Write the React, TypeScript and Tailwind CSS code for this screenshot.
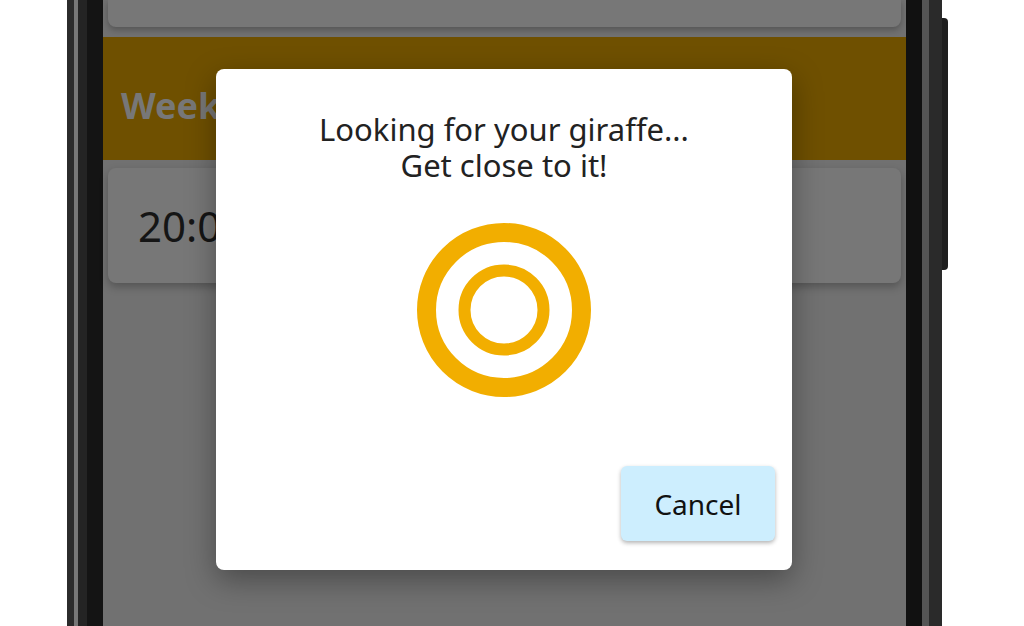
function Target() {
  return (
    <svg width="176" height="176" viewBox="0 0 176 176">
      <circle cx="88" cy="88" r="77.5" fill="none" stroke="#f2ae00" strokeWidth="19" />
      <circle cx="88" cy="88" r="39.5" fill="none" stroke="#f2ae00" strokeWidth="12" />
    </svg>
  )
}

export default function App() {
  return (
    <div className="w-[1024px] h-[626px] bg-white overflow-hidden flex" style={{ fontFamily: '"Noto Sans", "Open Sans", sans-serif' }}>
      <div className="ml-[67px] flex h-full">
        {/* left bezel */}
        <div className="w-[7px] bg-[#2b2b2b]" />
        <div className="w-[4px] bg-[#777]" />
        <div className="w-[9px] bg-[#242424]" />
        <div className="w-[16px] bg-[#141414]" />

        {/* screen */}
        <div className="relative w-[803px] h-full bg-[#717171] flex flex-col">
          <div className="mx-[5px] h-[27px] rounded-b-lg bg-[#777] shadow-[0_3px_6px_rgba(0,0,0,0.25)]" />
          <div className="mt-[10px] h-[123px] bg-[#6f5000] flex items-center px-[18px]">
            <span className="text-[36px] font-bold text-[#777] pt-[14px]">Weekdays</span>
          </div>
          <div className="mt-[8px] mx-[5px] h-[115px] rounded-lg bg-[#777] shadow-[0_4px_8px_rgba(0,0,0,0.25)] flex items-center pl-[30px]">
            <span className="text-[42px] text-[#151515]">20:00</span>
          </div>

          {/* dialog */}
          <div className="absolute inset-0 flex justify-center pt-[69px] pr-[1px]">
            <div className="w-[576px] h-[501px] bg-white rounded-lg shadow-[0_10px_30px_rgba(0,0,0,0.35)] flex flex-col items-center pt-[42px]">
              <div className="text-[31px] leading-[36px] text-[#222] text-center flex flex-col">
                <span>Looking for your giraffe...</span>
                <span>Get close to it!</span>
              </div>
              <div className="mt-[39px]">
                <Target />
              </div>
              <div className="flex-1" />
              <div className="self-stretch flex justify-end pr-[17px] pb-[29px]">
                <button className="w-[154px] h-[75px] rounded-md bg-[#cdeefe] text-[28px] text-[#111] shadow-[0_2px_4px_rgba(0,0,0,0.3)]">
                  Cancel
                </button>
              </div>
            </div>
          </div>
        </div>

        {/* right bezel */}
        <div className="w-[16px] bg-[#111]" />
        <div className="w-[7px] bg-[#555]" />
        <div className="w-[13px] bg-[#2a2a2a]" />
        <div className="w-[6px]">
          <div className="mt-[18px] h-[252px] bg-[#1e1e1e] rounded-r-sm" />
        </div>
      </div>
    </div>
  )
}
